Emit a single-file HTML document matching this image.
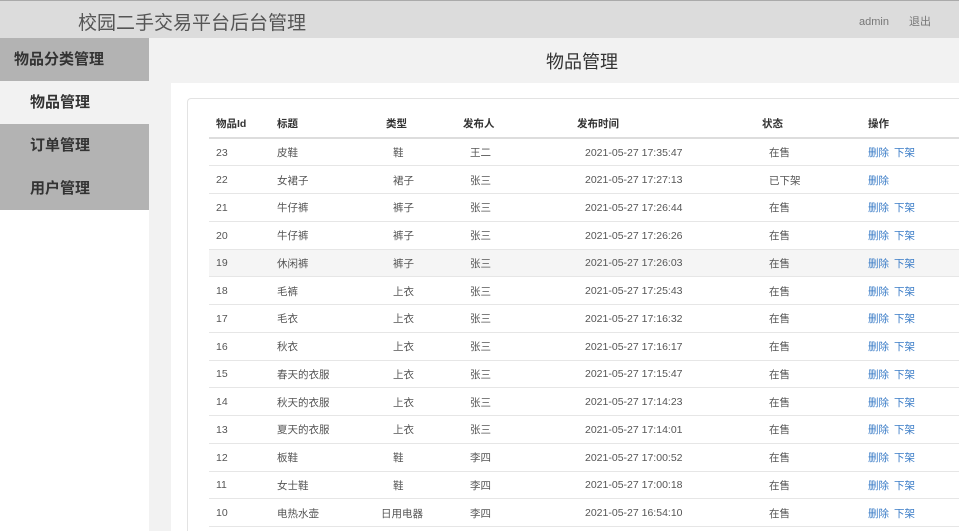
<!DOCTYPE html>
<html><head><meta charset="utf-8"><style>
*{margin:0;padding:0;box-sizing:border-box}
html,body{width:959px;height:531px;overflow:hidden}
body{background:#f2f2f2;font-family:"Liberation Sans","Noto Sans CJK SC",sans-serif;position:relative}
.hd{position:absolute;left:0;top:0;width:959px;height:38px;background:#dcdcdc;border-top:1px solid #aaa}
.hd .t{position:absolute;left:78px;top:7px;font-size:19px;color:#555}
.hd .r{position:absolute;right:28px;top:12px;font-size:11px;color:#777}
.hd .r span{margin-left:20px}
.sb{position:absolute;left:0;top:38px;width:149px;height:493px;background:#fff}
.sb div{height:43px;line-height:43px;font-size:15px;font-weight:bold;color:#333;background:#b3b3b3;padding-left:30px}
.sb div.a{background:#f2f2f2}
.sb div.f{padding-left:14px;height:43px}
.title{position:absolute;left:546px;top:38px;height:45px;line-height:48px;font-size:18px;color:#333}
.panel{position:absolute;left:171px;top:83px;width:788px;height:448px;background:#fff}
.card{position:absolute;left:187px;top:98px;width:772px;height:433px;border:1px solid #e3e3e3;border-right:none;border-bottom:none;border-radius:4px 0 0 0;background:#fff}
table{position:absolute;left:209px;top:110px;border-collapse:collapse;font-size:10.5px;color:#555;table-layout:fixed;width:750px}
th{text-align:left;font-weight:bold;color:#333;height:28px;border-bottom:2px solid #ddd;padding:0 0 0 7px}
td{height:27.75px;border-bottom:1px solid #e6e6e6;padding:1px 0 0 7px;vertical-align:middle}
tr.h td{background:#f5f5f5}
a{color:#3a7cc7;text-decoration:none;margin-right:5px}
</style></head><body>
<div class="hd"><div class="t">校园二手交易平台后台管理</div><div class="r"><span>admin</span><span>退出</span></div></div>
<div class="sb"><div class="f">物品分类管理</div><div class="a">物品管理</div><div>订单管理</div><div>用户管理</div></div>
<div class="title">物品管理</div>
<div class="panel"></div>
<div class="card"></div>
<table>
<colgroup><col style="width:61px"><col style="width:109px"><col style="width:77px"><col style="width:114px"><col style="width:185px"><col style="width:106px"><col style="width:98px"></colgroup>
<tr><th>物品Id</th><th>标题</th><th>类型</th><th>发布人</th><th>发布时间</th><th>状态</th><th>操作</th></tr>
<tr><td>23</td><td>皮鞋</td><td style="padding-left:14px">鞋</td><td style="padding-left:14px">王二</td><td style="padding-left:15px">2021-05-27 17:35:47</td><td style="padding-left:14px">在售</td><td><a>删除</a><a>下架</a></td></tr>
<tr><td>22</td><td>女裙子</td><td style="padding-left:14px">裙子</td><td style="padding-left:14px">张三</td><td style="padding-left:15px">2021-05-27 17:27:13</td><td style="padding-left:14px">已下架</td><td><a>删除</a></td></tr>
<tr><td>21</td><td>牛仔裤</td><td style="padding-left:14px">裤子</td><td style="padding-left:14px">张三</td><td style="padding-left:15px">2021-05-27 17:26:44</td><td style="padding-left:14px">在售</td><td><a>删除</a><a>下架</a></td></tr>
<tr><td>20</td><td>牛仔裤</td><td style="padding-left:14px">裤子</td><td style="padding-left:14px">张三</td><td style="padding-left:15px">2021-05-27 17:26:26</td><td style="padding-left:14px">在售</td><td><a>删除</a><a>下架</a></td></tr>
<tr class="h"><td>19</td><td>休闲裤</td><td style="padding-left:14px">裤子</td><td style="padding-left:14px">张三</td><td style="padding-left:15px">2021-05-27 17:26:03</td><td style="padding-left:14px">在售</td><td><a>删除</a><a>下架</a></td></tr>
<tr><td>18</td><td>毛裤</td><td style="padding-left:14px">上衣</td><td style="padding-left:14px">张三</td><td style="padding-left:15px">2021-05-27 17:25:43</td><td style="padding-left:14px">在售</td><td><a>删除</a><a>下架</a></td></tr>
<tr><td>17</td><td>毛衣</td><td style="padding-left:14px">上衣</td><td style="padding-left:14px">张三</td><td style="padding-left:15px">2021-05-27 17:16:32</td><td style="padding-left:14px">在售</td><td><a>删除</a><a>下架</a></td></tr>
<tr><td>16</td><td>秋衣</td><td style="padding-left:14px">上衣</td><td style="padding-left:14px">张三</td><td style="padding-left:15px">2021-05-27 17:16:17</td><td style="padding-left:14px">在售</td><td><a>删除</a><a>下架</a></td></tr>
<tr><td>15</td><td>春天的衣服</td><td style="padding-left:14px">上衣</td><td style="padding-left:14px">张三</td><td style="padding-left:15px">2021-05-27 17:15:47</td><td style="padding-left:14px">在售</td><td><a>删除</a><a>下架</a></td></tr>
<tr><td>14</td><td>秋天的衣服</td><td style="padding-left:14px">上衣</td><td style="padding-left:14px">张三</td><td style="padding-left:15px">2021-05-27 17:14:23</td><td style="padding-left:14px">在售</td><td><a>删除</a><a>下架</a></td></tr>
<tr><td>13</td><td>夏天的衣服</td><td style="padding-left:14px">上衣</td><td style="padding-left:14px">张三</td><td style="padding-left:15px">2021-05-27 17:14:01</td><td style="padding-left:14px">在售</td><td><a>删除</a><a>下架</a></td></tr>
<tr><td>12</td><td>板鞋</td><td style="padding-left:14px">鞋</td><td style="padding-left:14px">李四</td><td style="padding-left:15px">2021-05-27 17:00:52</td><td style="padding-left:14px">在售</td><td><a>删除</a><a>下架</a></td></tr>
<tr><td>11</td><td>女士鞋</td><td style="padding-left:14px">鞋</td><td style="padding-left:14px">李四</td><td style="padding-left:15px">2021-05-27 17:00:18</td><td style="padding-left:14px">在售</td><td><a>删除</a><a>下架</a></td></tr>
<tr><td>10</td><td>电热水壶</td><td style="padding-left:2px">日用电器</td><td style="padding-left:14px">李四</td><td style="padding-left:15px">2021-05-27 16:54:10</td><td style="padding-left:14px">在售</td><td><a>删除</a><a>下架</a></td></tr>
</table>
</body></html>
